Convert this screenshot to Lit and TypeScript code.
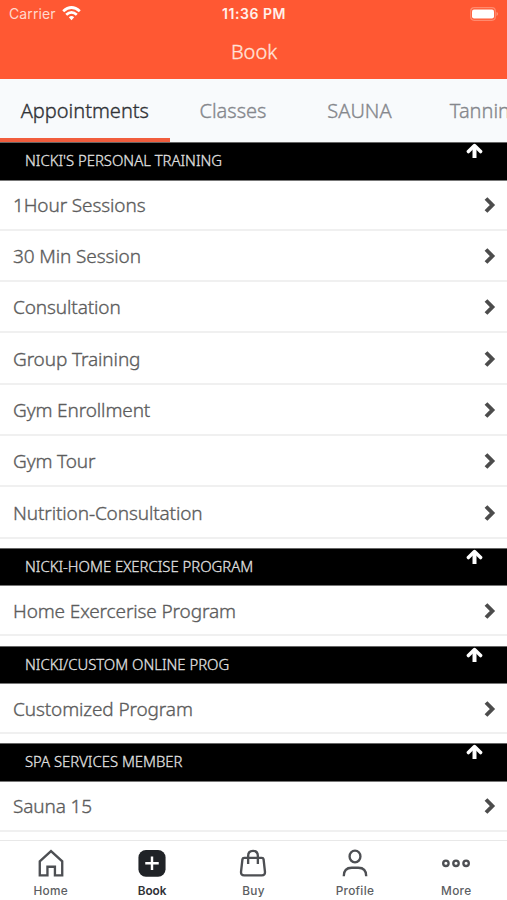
import { LitElement, html, css, svg } from "lit";
import { customElement, property, state } from "lit/decorators.js";
import { classMap } from "lit/directives/class-map.js";

interface Section {
  title: string;
  items: string[];
}

const sections: Section[] = [
  {
    title: "NICKI'S PERSONAL TRAINING",
    items: ["1Hour Sessions", "30 Min Session", "Consultation", "Group Training", "Gym Enrollment", "Gym Tour", "Nutrition-Consultation"],
  },
  { title: "NICKI-HOME EXERCISE PROGRAM", items: ["Home Exercerise Program"] },
  { title: "NICKI/CUSTOM ONLINE PROG", items: ["Customized Program"] },
  { title: "SPA SERVICES MEMBER", items: ["Sauna 15"] },
];

const navIcons: Record<string, unknown> = {
  Home: svg`<path d="M4 13.2 L16 2.2 L28 13.2 V28.2 H20.2 V19 H12.2 V28.2 H4 Z"/>`,
  Book: svg`<rect x="1.5" y="1" width="29" height="28.6" rx="8" fill="#202327" stroke="none"/><path d="M16 8 V22.5 M8.8 15.2 H23.2" stroke="#fff" stroke-width="2.6"/>`,
  Buy: svg`<path d="M6.5 9.5 H25.5 Q27 9.5 27.3 11 L28.8 24.5 Q29 28.2 25.5 28.2 H6.5 Q3 28.2 3.2 24.5 L4.7 11 Q5 9.5 6.5 9.5 Z M10.8 16 V7.5 Q10.8 2 16 2 Q21.2 2 21.2 7.5 V16"/>`,
  Profile: svg`<ellipse cx="16" cy="8" rx="5.8" ry="6.3"/><path d="M4 29 Q4 20 12.5 20 H19.5 Q28 20 28 29"/>`,
  More: svg`<circle cx="5.2" cy="15.3" r="2.9"/><circle cx="16" cy="15.3" r="2.9"/><circle cx="26.8" cy="15.3" r="2.9"/>`,
};

@customElement("status-bar")
class StatusBar extends LitElement {
  static styles = css`
    :host { display: grid; grid-template-columns: 1fr auto 1fr; align-items: center; height: 27px; padding: 0 8px 0 9px; color: #fff; font: 14px/27px Inter, sans-serif; }
    .left { display: flex; align-items: center; gap: 6px; color: #ffd9cd; letter-spacing: 0.1px; }
    .time { font-weight: 600; font-size: 14px; letter-spacing: 0.55px; color: #fff0ea; }
    .battery { justify-self: end; }
    svg { display: block; }
  `;
  render() {
    return html`
      <div class="left">Carrier
        <svg width="19" height="15" viewBox="0 0 19 15" fill="none" stroke="#fff" stroke-width="2.8">
          <path d="M1.2 5.2 Q9.5 -2.2 17.8 5.2"/><path d="M4.2 8.7 Q9.5 4 14.8 8.7"/>
          <path d="M6.8 11.2 Q9.5 8.8 12.2 11.2 L9.5 14.2 Z" fill="#fff" stroke="none"/>
        </svg>
      </div>
      <div class="time">11:36 PM</div>
      <svg class="battery" width="29" height="14" viewBox="0 0 29 14">
        <rect x=".7" y=".7" width="24.6" height="12.6" rx="3.5" fill="none" stroke="#ff8a6e" stroke-width="1.2"/>
        <rect x="2" y="2.4" width="22" height="9.2" rx="2" fill="#fff"/>
        <path d="M26.6 4.8 Q29 7 26.6 9.2 Z" fill="#ffa58f"/>
      </svg>`;
  }
}

@customElement("service-section")
class ServiceSection extends LitElement {
  @property({ attribute: false }) section!: Section;
  static styles = css`
    :host { display: block; flex: none; font-family: "Noto Sans", sans-serif; font-weight: 300; -webkit-text-stroke: 0.35px currentColor; }
    .head { display: flex; justify-content: space-between; box-sizing: border-box; height: 38.4px; padding: 0 24px 0 25px; background: #000; color: #dedede; border-top: 1px solid #666; border-bottom: 1px solid #777; font-size: 14.85px; line-height: 34px; }
    .head svg { margin-top: 0; }
    .row { display: flex; align-items: center; justify-content: space-between; box-sizing: border-box; height: 51.3px; padding: 1px 10px 0 13px; border-bottom: 2px solid #f0f0f0; color: #5c5c5c; font-size: 19px; letter-spacing: -0.12px; }
    .row:nth-child(2) { height: 50px; }
    svg { display: block; }
  `;
  render() {
    return html`
      <div class="head"><span>${this.section.title}</span>
        <svg width="17" height="16" viewBox="0 0 17 16" fill="none" stroke="#fff" stroke-width="4">
          <path d="M8.5 15 V3" stroke-linecap="butt"/><path d="M2.4 8.6 L8.5 2.6 L14.6 8.6" stroke-linecap="round" stroke-linejoin="round" stroke-width="3.5"/>
        </svg>
      </div>
      ${this.section.items.map((item) => html`<div class="row"><span>${item}</span>
        <svg width="14" height="16" viewBox="0 0 14 16" fill="none" stroke="#4c4c4c" stroke-width="3.9"><path d="M3 1.5 L9.4 8 L3 14.5"/></svg>
      </div>`)}`;
  }
}

@customElement("app-root")
class AppRoot extends LitElement {
  @state() tab = "Appointments";
  @state() page = "Book";
  static styles = css`
    :host { display: flex; flex-direction: column; width: 507px; height: 900px; overflow: hidden; background: #fff; font-family: "Noto Sans", sans-serif; }
    .top { flex: none; height: 79.3px; background: #ff5833; }
    .title { color: #ffe3da; text-align: center; font-size: 20px; font-weight: 300; line-height: 50px; padding-left: 1px; -webkit-text-stroke: 0.35px currentColor; }
    .tabs { flex: none; display: flex; height: 63.2px; background: #f8fafc; overflow: hidden; font-size: 20px; font-weight: 300; line-height: 63.5px; white-space: nowrap; color: #85878c; -webkit-text-stroke: 0.35px currentColor; }
    .tab { flex: none; box-sizing: border-box; height: 63.2px; width: 126.5px; text-align: center; }
    .tab:first-child { width: 169.7px; }
    .active { color: #303236; border-bottom: 4px solid #f15d3d; }
    .list { flex: 1; min-height: 0; display: flex; flex-direction: column; gap: 9.3px; overflow: hidden; }
    .nav { flex: none; box-sizing: border-box; height: 60.5px; display: grid; grid-template-columns: repeat(5, 1fr); border-top: 1.5px solid #e8e8e8; background: #fff; font: 500 11.8px/16px Inter, sans-serif; color: #5c5e62; }
    .item { display: flex; flex-direction: column; align-items: center; padding-top: 8px; gap: 5px; letter-spacing: 0.3px; }
    .current { color: #303236; font-weight: 600; letter-spacing: 0; }
    svg { display: block; }
  `;
  render() {
    return html`
      <div class="top"><status-bar></status-bar><div class="title">Book</div></div>
      <div class="tabs">${["Appointments", "Classes", "SAUNA", "Tanning"].map((t) => html`<div class=${classMap({ tab: true, active: t === this.tab })} @click=${() => (this.tab = t)}>${t}</div>`)}</div>
      <div class="list">${sections.map((s) => html`<service-section .section=${s}></service-section>`)}</div>
      <div class="nav">${Object.keys(navIcons).map((n) => html`<div class=${classMap({ item: true, current: n === this.page })} @click=${() => (this.page = n)}>
        <svg width="30" height="29" viewBox="0 0 32 31" fill="none" stroke="#4d4f53" stroke-width="2.5">${navIcons[n]}</svg><span>${n}</span></div>`)}</div>`;
  }
}
